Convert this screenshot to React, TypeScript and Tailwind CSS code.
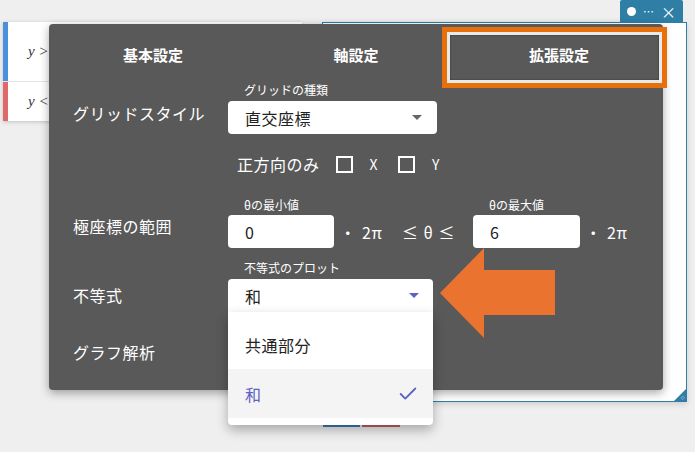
import React from 'react'
import { Check } from 'lucide-react'

const Caret = ({ color }: { color: string }) => (
  <svg width="10" height="5" viewBox="0 0 10 5">
    <polygon points="0,0 10,0 5,5" fill={color} />
  </svg>
)

function SmallLabel({ children }: { children: React.ReactNode }) {
  return <div className="pl-[16px] text-[12px] leading-4 tracking-normal text-white">{children}</div>
}

function SettingsPanel() {
  return (
    <div className="absolute left-[49px] top-[24px] h-[366px] w-[614px] rounded-[4px] bg-[#595959] text-white shadow-[0_3px_10px_rgba(0,0,0,0.35)]">
      {/* tabs */}
      <div className="grid h-[58px] grid-cols-[208px_198px_208px] text-[15px] font-semibold">
        <div className="flex items-center justify-center pt-[4px]">基本設定</div>
        <div className="flex items-center justify-center pt-[4px]">軸設定</div>
        <div className="flex items-center justify-center pt-[4px]">拡張設定</div>
      </div>
      <div className="absolute left-[393px] top-[3px] h-[61px] w-[225px] border-[5px] border-[#e8700c]">
        <div className="h-full w-full border-[3px] border-[#e9e9e9] shadow-[inset_0_0_2px_rgba(0,0,0,0.5)]" />
      </div>

      <div className="flex flex-col px-[24px] text-[16px] leading-6 tracking-[0.5px]">
        {/* grid style */}
        <div className="flex">
          <div className="w-[155px] pt-[19px]">グリッドスタイル</div>
          <div>
            <SmallLabel>グリッドの種類</SmallLabel>
            <div className="mt-[3px] flex h-[33px] w-[209px] items-center justify-between rounded-[4px] bg-white pl-[17px] pr-[15px] text-[#222]">
              <span>直交座標</span>
              <Caret color="#666" />
            </div>
          </div>
        </div>

        {/* positive only */}
        <div className="mt-[18px] flex h-6 items-center">
          <div className="w-[155px]" />
          <span className="ml-[9px]">正方向のみ</span>
          <span className="ml-4 h-[17px] w-[17px] border-2 border-white" />
          <span className="ml-[17px] text-[14px]">X</span>
          <span className="ml-5 h-[17px] w-[17px] border-2 border-white" />
          <span className="ml-[17px] text-[14px]">Y</span>
        </div>

        {/* polar range */}
        <div className="mt-[21px] flex">
          <div className="w-[155px] pt-[17px]">極座標の範囲</div>
          <div className="flex items-end">
            <div>
              <SmallLabel>θの最小値</SmallLabel>
              <div className="mt-[2px] flex h-[33px] w-[106px] items-center rounded-[4px] bg-white pl-[17px] text-[#222]">0</div>
            </div>
            <span className="flex h-[33px] w-[28px] items-center justify-center">・</span>
            <span className="flex h-[33px] w-[40px] items-center">2π</span>
            <span className="flex h-[33px] w-[71px] items-center tracking-[1px]">≤ θ ≤</span>
            <div>
              <SmallLabel>θの最大値</SmallLabel>
              <div className="mt-[2px] flex h-[33px] w-[107px] items-center rounded-[4px] bg-white pl-[17px] text-[#222]">6</div>
            </div>
            <span className="flex h-[33px] w-[27px] items-center justify-center">・</span>
            <span className="flex h-[33px] items-center">2π</span>
          </div>
        </div>

        {/* inequality */}
        <div className="mt-[12px] flex">
          <div className="w-[155px] pt-[23px]">不等式</div>
          <div className="relative">
            <SmallLabel>不等式のプロット</SmallLabel>
            <div className="mt-[3px] flex h-[33px] w-[205px] items-center justify-between rounded-t-[4px] bg-white pl-[17px] pr-[14px] text-[#222]">
              <span>和</span>
              <Caret color="#5c63c4" />
            </div>
            <div className="absolute left-0 top-full z-20 w-[205px] rounded-b-[4px] bg-white pb-[7px] pt-[8px] shadow-[0_5px_12px_rgba(0,0,0,0.3)]">
              <div className="flex h-[49px] items-center pl-[17px] text-[#222]">共通部分</div>
              <div className="flex h-[49px] items-center justify-between bg-[#f4f4f5] pl-[17px] pr-[14px] text-[#5c63c4]">
                <span>和</span>
                <Check size={22} strokeWidth={2} />
              </div>
            </div>
          </div>
        </div>

        {/* graph analysis */}
        <div className="mt-[28px] flex">
          <div className="w-[155px]">グラフ解析</div>
        </div>
      </div>
    </div>
  )
}

export default function App() {
  return (
    <div className="relative h-[452px] w-[695px] overflow-hidden bg-[#efefef] font-['Noto_Sans_CJK_JP','Noto_Sans',sans-serif]">
      {/* expression list card */}
      <div className="absolute left-[3px] top-[22px] flex w-[299px] flex-col bg-white shadow-[0_1px_4px_rgba(0,0,0,0.2)]">
        <div className="flex h-[59px] items-center border-l-[5px] border-[#4a90dc] pl-[20px] font-['Liberation_Serif',serif] text-[15px] italic text-[#333]">
          y &gt; x
        </div>
        <div className="h-px bg-[#e4e4e4]" />
        <div className="flex h-[39px] items-center border-l-[5px] border-[#e06868] pl-[20px] font-['Liberation_Serif',serif] text-[15px] italic text-[#333]">
          y &lt; x
        </div>
      </div>

      {/* graph window */}
      <div className="absolute left-[322px] top-[22px] h-[380px] w-[365px] border-[1.5px] border-[#2e7ea6] bg-white shadow-[0_2px_6px_rgba(0,0,0,0.15)]">
        <svg className="absolute bottom-0 right-0" width="12" height="12" viewBox="0 0 12 12">
          <polygon points="12,0 12,12 0,12" fill="#2e7ea6" />
          <rect x="7.5" y="7.5" width="2.5" height="2.5" fill="none" stroke="#9ecbe0" strokeWidth="0.6" transform="rotate(45 8.75 8.75)" />
        </svg>
      </div>
      <div className="absolute left-[620px] top-0 flex h-[22px] w-[63px] items-center justify-between rounded-t-[2px] bg-[#2e7ea6] px-[7px] text-white">
        <span className="h-[9px] w-[9px] rounded-full bg-white" />
        <span className="text-[11px] leading-none">⋯</span>
        <span className="text-[15px] leading-none">×</span>
      </div>
      <div className="absolute left-[323px] top-[424px] h-[3px] w-[37px] bg-[#3a7ab8]" />
      <div className="absolute left-[362px] top-[424px] h-[3px] w-[38px] bg-[#c95c5c]" />

      <SettingsPanel />

      {/* annotation arrow */}
      <svg className="absolute left-0 top-0 z-10" width="695" height="452">
        <polygon points="440,293 484,248 484,270 555,270 555,315 484,315 484,338" fill="#e9732f" />
      </svg>
    </div>
  )
}
